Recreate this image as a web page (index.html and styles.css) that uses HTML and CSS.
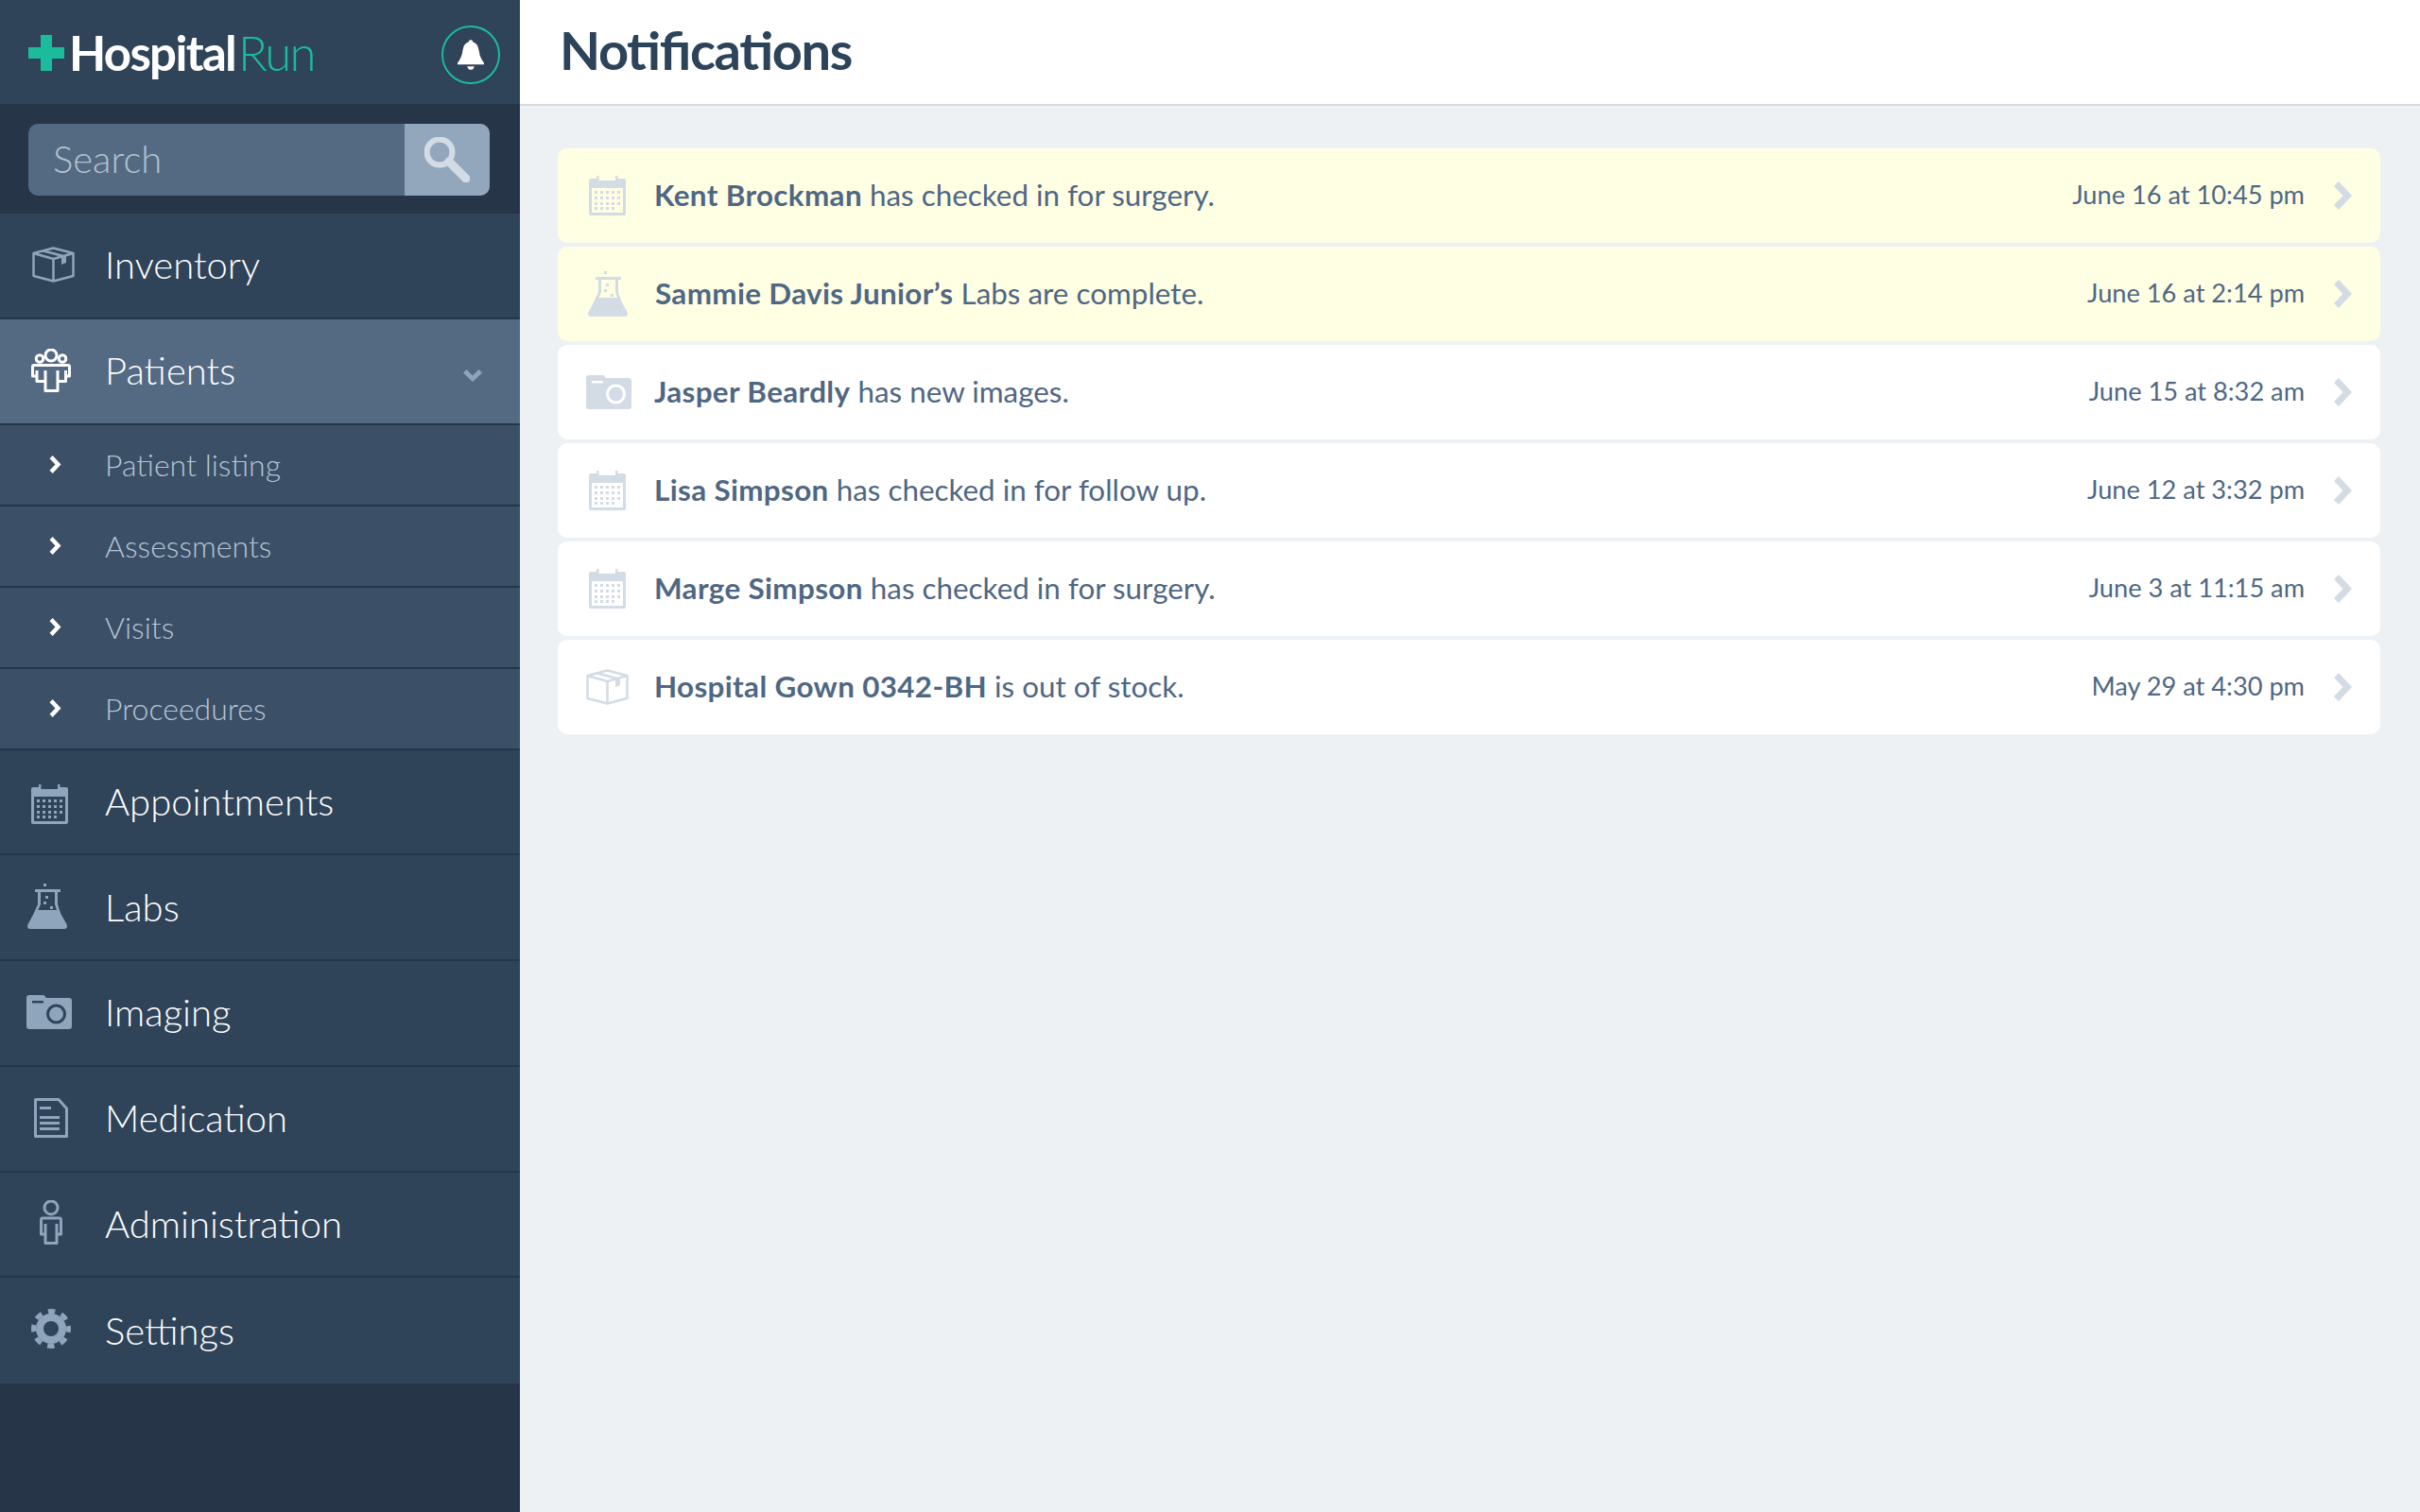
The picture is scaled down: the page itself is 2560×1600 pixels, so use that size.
FILE: index.html
```html
<!DOCTYPE html>
<html lang="en">
<head>
  <meta charset="UTF-8">
  <title>HospitalRun - Notifications</title>
  <link rel="stylesheet" href="styles.css">
</head>
<body>
  <svg class="icon-defs" xmlns="http://www.w3.org/2000/svg">
    <symbol id="i-calendar" viewBox="0 0 39 42">
      <path fill="currentColor" fill-rule="evenodd" d="M2 3H8V0H10.500V5H28V0H30.500V3H37Q39 3 39 5V40Q39 42 37 42H2Q0 42 0 40V5Q0 3 2 3ZM3 13V39H36V13Z"/>
      <path fill="currentColor" d="M6 16h3v3H6zM12 16h3v3h-3zM18 16h3v3h-3zM24 16h3v3h-3zM30 16h3v3h-3zM6 22h3v3H6zM12 22h3v3h-3zM18 22h3v3h-3zM24 22h3v3h-3zM30 22h3v3h-3zM6 28h3v3H6zM12 28h3v3h-3zM18 28h3v3h-3zM24 28h3v3h-3zM30 28h3v3h-3zM6 33h3v3H6zM12 33h3v3h-3zM18 33h3v3h-3zM24 33h3v3h-3z"/>
    </symbol>
    <symbol id="i-box" viewBox="0 0 45 38">
      <g fill="none" stroke="currentColor" stroke-width="2.500" stroke-linejoin="round">
        <path d="M22.500 1.500L43.500 7V31L22.500 36.500L1.500 31V7ZM1.500 7L22.500 13L43.500 7V31M22.500 13V36.500"/>
        <path d="M12 4.500L33 10"/>
      </g>
      <path fill="currentColor" d="M28 11L36 8.500V17L31 19V12Z"/>
    </symbol>
    <symbol id="i-patients" viewBox="0 0 42 46">
      <g fill="none" stroke="currentColor" stroke-width="3" stroke-linejoin="round">
        <circle cx="21" cy="7" r="6"/>
        <circle cx="9" cy="10.500" r="3.800"/>
        <circle cx="33" cy="10.500" r="3.800"/>
        <path d="M1.500 19Q1.500 17.500 3 17.500H39Q40.500 17.500 40.500 19V29H36.500V34.500H28V44.500H15V34.500H6V29H1.500ZM6 23V29M15 23V34.500M28 23V34.500M36.500 23V29"/>
      </g>
    </symbol>
    <symbol id="i-flask" viewBox="0 0 42 48">
      <path fill="currentColor" d="M17 0h3v3h-3zM8 6H35V9H32V22H29V9H14V22H11V9H8zM11 22h3L6 40H3zM29 22h3L38 40H35zM19 13h3v3h-3zM17 19h3v3h-3zM24 24h3v3h-3z"/>
      <path fill="currentColor" d="M9 28H33L41.500 43Q43 48 39 48H3Q-1 48 .5 43Z"/>
    </symbol>
    <symbol id="i-camera" viewBox="0 0 48 36">
      <path fill="currentColor" fill-rule="evenodd" d="M3 0H17Q20 0 20.500 3H45Q48 3 48 6V33Q48 36 45 36H3Q0 36 0 33V3Q0 0 3 0ZM6 6V8.500H18V6ZM31.500 9.500A10.500 10.500 0 1 0 31.501 30.500A10.500 10.500 0 1 0 31.500 9.500ZM31.500 12.500A7.500 7.500 0 1 1 31.499 27.500A7.500 7.500 0 1 1 31.500 12.500Z"/>
    </symbol>
    <symbol id="i-doc" viewBox="0 0 36 42">
      <g fill="none" stroke="currentColor" stroke-width="3" stroke-linejoin="round">
        <path d="M1.500 1.500H26L34.500 11V40.500H1.500Z"/>
        <path d="M6 10.500H18M6 20.500H27M6 26.500H27M6 32.500H27"/>
      </g>
    </symbol>
    <symbol id="i-person" viewBox="0 0 24 47">
      <g fill="none" stroke="currentColor" stroke-width="3" stroke-linejoin="round">
        <circle cx="12" cy="8" r="7"/>
        <path d="M3 19H21Q22.500 19 22.500 21V36H18V45.500H6V36H1.500V21Q1.500 19 3 19ZM6 25V36M18 25V36"/>
      </g>
    </symbol>
    <symbol id="i-gear" viewBox="0 0 42 42">
      <g fill="none" stroke="currentColor">
        <circle cx="21" cy="21" r="12" stroke-width="8"/>
        <circle cx="21" cy="21" r="18.500" stroke-width="5" stroke-dasharray="7.500 7.030" stroke-dashoffset="3.750"/>
      </g>
    </symbol>
    <symbol id="i-arrow" viewBox="0 0 19 30">
      <path fill="currentColor" d="M0 5L5 0L19 15L5 30L0 25L9.500 15Z"/>
    </symbol>
  </svg>

  <div class="app">
    <aside class="sidebar">
      <div class="brand">
        <div class="logo">
          <svg class="logo-cross" viewBox="0 0 38 38"><path d="M13 0H25V13H38V25H25V38H13V25H0V13H13Z"/></svg>
          <span class="logo-text">Hospital<span class="logo-run">Run</span></span>
        </div>
        <button class="bell" type="button" aria-label="Notifications">
          <svg viewBox="0 0 30 34"><path d="M15 0Q17.500 0 17.500 2.500Q23 4 24 11Q25 20 30 26V28H0V26Q5 20 6 11Q7 4 12.500 2.500Q12.500 0 15 0ZM11 30H19Q18 34 15 34Q12 34 11 30Z"/></svg>
        </button>
      </div>

      <div class="search-band">
        <form class="search">
          <input class="search-input" type="text" placeholder="Search">
          <button class="search-btn" type="button" aria-label="Search">
            <svg viewBox="0 0 48 48"><circle cx="16" cy="16" r="13.500"/><path d="M26 26L44 44"/></svg>
          </button>
        </form>
      </div>

      <nav class="menu">
        <a class="menu-item"><svg class="icon side-box"><use href="#i-box"/></svg>Inventory</a>
        <a class="menu-item is-open"><svg class="icon side-patients"><use href="#i-patients"/></svg>Patients
          <svg class="caret" viewBox="0 0 20 13"><path d="M0 3.500L3.500 0L10 6.500L16.500 0L20 3.500L10 13Z"/></svg>
        </a>
        <a class="sub-item"><svg class="sub-arrow"><use href="#i-arrow"/></svg>Patient listing</a>
        <a class="sub-item"><svg class="sub-arrow"><use href="#i-arrow"/></svg>Assessments</a>
        <a class="sub-item"><svg class="sub-arrow"><use href="#i-arrow"/></svg>Visits</a>
        <a class="sub-item"><svg class="sub-arrow"><use href="#i-arrow"/></svg>Proceedures</a>
        <a class="menu-item"><svg class="icon side-calendar"><use href="#i-calendar"/></svg>Appointments</a>
        <a class="menu-item"><svg class="icon side-flask"><use href="#i-flask"/></svg>Labs</a>
        <a class="menu-item"><svg class="icon side-camera"><use href="#i-camera"/></svg>Imaging</a>
        <a class="menu-item"><svg class="icon side-doc"><use href="#i-doc"/></svg>Medication</a>
        <a class="menu-item"><svg class="icon side-person"><use href="#i-person"/></svg>Administration</a>
        <a class="menu-item"><svg class="icon side-gear"><use href="#i-gear"/></svg>Settings</a>
      </nav>
    </aside>

    <main class="content">
      <header class="topbar">
        <h1>Notifications</h1>
      </header>

      <ul class="notes">
        <li class="note is-new">
          <svg class="icon row-calendar"><use href="#i-calendar"/></svg>
          <p><strong>Kent Brockman</strong> has checked in for surgery.</p>
          <time>June 16 at 10:45 pm</time>
          <svg class="note-arrow"><use href="#i-arrow"/></svg>
        </li>
        <li class="note is-new">
          <svg class="icon row-flask"><use href="#i-flask"/></svg>
          <p><strong>Sammie Davis Junior’s</strong> Labs are complete.</p>
          <time>June 16 at 2:14 pm</time>
          <svg class="note-arrow"><use href="#i-arrow"/></svg>
        </li>
        <li class="note">
          <svg class="icon row-camera"><use href="#i-camera"/></svg>
          <p><strong>Jasper Beardly</strong> has new images.</p>
          <time>June 15 at 8:32 am</time>
          <svg class="note-arrow"><use href="#i-arrow"/></svg>
        </li>
        <li class="note">
          <svg class="icon row-calendar"><use href="#i-calendar"/></svg>
          <p><strong>Lisa Simpson</strong> has checked in for follow up.</p>
          <time>June 12 at 3:32 pm</time>
          <svg class="note-arrow"><use href="#i-arrow"/></svg>
        </li>
        <li class="note">
          <svg class="icon row-calendar"><use href="#i-calendar"/></svg>
          <p><strong>Marge Simpson</strong> has checked in for surgery.</p>
          <time>June 3 at 11:15 am</time>
          <svg class="note-arrow"><use href="#i-arrow"/></svg>
        </li>
        <li class="note">
          <svg class="icon row-box"><use href="#i-box"/></svg>
          <p><strong>Hospital Gown 0342-BH</strong> is out of stock.</p>
          <time>May 29 at 4:30 pm</time>
          <svg class="note-arrow"><use href="#i-arrow"/></svg>
        </li>
      </ul>
    </main>
  </div>
</body>
</html>
```

FILE: styles.css
```css
* {
  box-sizing: border-box;
}

body {
  margin: 0;
  font-family: Lato, "Open Sans", sans-serif;
  background-color: #eef1f4;
}

.icon-defs {
  display: none;
}

.app {
  display: flex;
  height: 1600px;
  overflow: hidden;
}

/* sidebar */

.sidebar {
  flex: 0 0 550px;
  min-width: 0;
  display: flex;
  flex-direction: column;
  background-color: #263548;
}

.brand {
  flex: 0 0 110px;
  display: flex;
  align-items: center;
  justify-content: space-between;
  padding: 0 21px 0 30px;
  background-color: #2f4359;
}

.logo {
  display: flex;
  align-items: center;
}

.logo-cross {
  width: 38px;
  height: 38px;
  margin-top: 2px;
  fill: #1abc9c;
}

.logo-text {
  margin-left: 5px;
  font-size: 51px;
  font-weight: 700;
  line-height: 1;
  letter-spacing: -1.700px;
  color: #fff;
}

.logo-run {
  margin-left: 3px;
  font-weight: 300;
  color: #1abc9c;
}

.bell {
  display: flex;
  align-items: center;
  justify-content: center;
  width: 62px;
  height: 62px;
  margin-top: 6px;
  padding: 0;
  background: none;
  border: 2px solid #1abc9c;
  border-radius: 50%;
}

.bell svg {
  width: 28px;
  height: 32px;
  fill: #fff;
}

.search-band {
  flex: 0 0 116px;
  padding: 21px 32px 19px 30px;
}

.search {
  display: flex;
  height: 76px;
  border-radius: 10px;
  overflow: hidden;
  background-color: #546a83;
}

.search-input {
  flex: 1;
  width: 100%;
  min-width: 0;
  padding: 0 0 3px 26px;
  font-family: inherit;
  font-size: 40px;
  font-weight: 300;
  color: #fff;
  background: none;
  border: none;
}

.search-input::placeholder {
  color: #b4c2d1;
  opacity: 1;
}

.search-btn {
  flex: 0 0 90px;
  display: flex;
  align-items: center;
  justify-content: center;
  padding: 0;
  background-color: #93a7bc;
  border: none;
}

.search-btn svg {
  width: 48px;
  height: 48px;
  fill: none;
  stroke: #d3dbe5;
  stroke-width: 6;
  stroke-linecap: round;
}

.search-btn path {
  stroke-width: 9;
}

.menu {
  display: flex;
  flex-direction: column;
}

.menu-item {
  display: flex;
  align-items: center;
  height: 111.75px;
  padding: 0 0 1px 111px;
  position: relative;
  font-size: 40px;
  font-weight: 300;
  color: #fff;
  background-color: #2f4359;
  border-bottom: 2px solid #263548;
}

.menu-item:last-child {
  border-bottom: none;
}

.menu-item.is-open {
  background-color: #546a83;
}

.menu-item .icon {
  position: absolute;
  color: #8fa5bb;
}

.menu-item.is-open .icon {
  color: #fff;
}

.caret {
  position: absolute;
  top: 53px;
  right: 40px;
  width: 20px;
  height: 13px;
  fill: #8fa5bb;
}

.sub-item {
  display: flex;
  align-items: center;
  height: 86px;
  padding-left: 52px;
  font-size: 32px;
  font-weight: 300;
  color: #b4c5d6;
  background-color: #3b4f66;
  border-bottom: 2px solid #263548;
}

.sub-arrow {
  width: 13px;
  height: 19px;
  margin-right: 46px;
  color: #fff;
}

.side-box { left: 34px; width: 45px; height: 38px; }
.side-patients { left: 33px; width: 42px; height: 46px; }
.side-calendar { left: 33px; top: 36px; width: 39px; height: 42px; }
.side-flask { left: 29px; top: 30px; width: 42px; height: 48px; }
.side-camera { left: 28px; top: 36px; width: 48px; height: 36px; }
.side-doc { left: 36px; top: 33px; width: 36px; height: 42px; }
.side-person { left: 42px; top: 29px; width: 24px; height: 47px; }
.side-gear { left: 33px; top: 33px; width: 42px; height: 42px; }

/* main */

.content {
  flex: 1;
  min-width: 0;
}

.topbar {
  display: flex;
  align-items: center;
  height: 112px;
  padding: 0 0 5px 42px;
  background-color: #fff;
  border-bottom: 2px solid #d3dbe5;
}

.topbar h1 {
  margin: 0;
  font-size: 56px;
  font-weight: 700;
  letter-spacing: -1.400px;
  font-feature-settings: "liga" 1;
  color: #2d435a;
}

.notes {
  display: flex;
  flex-direction: column;
  gap: 4px;
  margin: 0;
  padding: 45px 42px 0 40px;
  list-style: none;
}

.note {
  display: flex;
  align-items: center;
  height: 100px;
  font-size: 31.4px;
  color: #4f6783;
  background-color: #fff;
  border-radius: 10px;
}

.note.is-new {
  background-color: #ffffe3;
}

.note .icon {
  flex: none;
  color: #d3dbe5;
}

.note p {
  flex: 1;
  margin: 0;
  padding-bottom: 3px;
}

.note strong {
  letter-spacing: .35px;
}

.note time {
  padding-bottom: 4px;
  font-size: 27.2px;
}

.note-arrow {
  flex: none;
  width: 19px;
  height: 30px;
  margin: 0 30px 0 31px;
  color: #d3dbe5;
}

.row-calendar { width: 39px; height: 42px; margin: 0 30px 0 33px; }
.row-flask { width: 42px; height: 48px; margin: 0 29px 0 32px; }
.row-camera { width: 48px; height: 36px; margin: 0 24px 0 30px; }
.row-box { width: 45px; height: 38px; margin: 0 27px 0 30px; }
```
